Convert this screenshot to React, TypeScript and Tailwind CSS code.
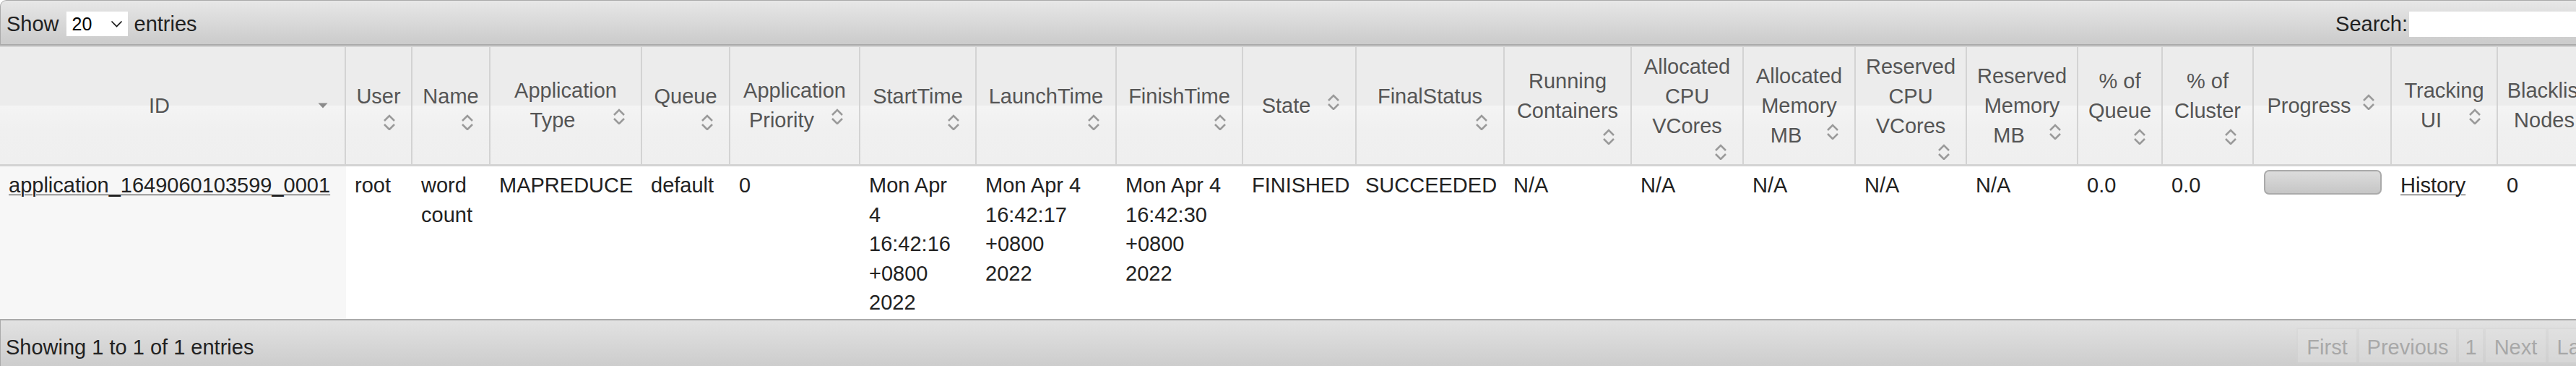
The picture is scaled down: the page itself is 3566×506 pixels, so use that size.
import React from "react";

type HeadCol = {
  w: string;
  lines: string[];
  icon: "inline" | "below";
  sorted?: boolean;
};

// column widths measured off the screenshot, header lines broken as shown
const columns: HeadCol[] = [
  { w: "w-[479px]", lines: ["ID"], icon: "inline", sorted: true },
  { w: "w-[92px]", lines: ["User"], icon: "below" },
  { w: "w-[108px]", lines: ["Name"], icon: "below" },
  { w: "w-[210px]", lines: ["Application", "Type"], icon: "inline" },
  { w: "w-[122px]", lines: ["Queue"], icon: "below" },
  { w: "w-[180px]", lines: ["Application", "Priority"], icon: "inline" },
  { w: "w-[161px]", lines: ["StartTime"], icon: "below" },
  { w: "w-[194px]", lines: ["LaunchTime"], icon: "below" },
  { w: "w-[175px]", lines: ["FinishTime"], icon: "below" },
  { w: "w-[157px]", lines: ["State"], icon: "inline" },
  { w: "w-[205px]", lines: ["FinalStatus"], icon: "below" },
  { w: "w-[176px]", lines: ["Running", "Containers"], icon: "below" },
  { w: "w-[155px]", lines: ["Allocated", "CPU", "VCores"], icon: "below" },
  { w: "w-[155px]", lines: ["Allocated", "Memory", "MB"], icon: "inline" },
  { w: "w-[154px]", lines: ["Reserved", "CPU", "VCores"], icon: "below" },
  { w: "w-[154px]", lines: ["Reserved", "Memory", "MB"], icon: "inline" },
  { w: "w-[117px]", lines: ["% of", "Queue"], icon: "below" },
  { w: "w-[126px]", lines: ["% of", "Cluster"], icon: "below" },
  { w: "w-[191px]", lines: ["Progress"], icon: "inline" },
  { w: "w-[147px]", lines: ["Tracking", "UI"], icon: "inline" },
  { w: "w-[166px]", lines: ["Blacklisted", "Nodes"], icon: "inline" },
];

const SortBoth = () => (
  <svg width="36" height="26" viewBox="0 0 36 26" className="shrink-0">
    <path d="M11 13 L18 6 L25 13" fill="none" stroke="#9a9a9a" strokeWidth="2.6" />
    <path d="M11 18 L18 25 L25 18" fill="none" stroke="#9a9a9a" strokeWidth="2.6" />
  </svg>
);

const SortDesc = () => (
  <svg width="36" height="26" viewBox="0 0 36 26" className="shrink-0">
    <polygon points="11.5,16.5 24.5,16.5 18,23.5" fill="#8a8a8a" />
  </svg>
);

const HeaderCell = ({ col }: { col: HeadCol }) => {
  const Icon = col.sorted ? SortDesc : SortBoth;
  const head = col.icon === "inline" ? col.lines.slice(0, -1) : col.lines;
  const last = col.lines[col.lines.length - 1];

  return (
    <th className="border-t-2 border-b-[3px] border-r-2 border-[#d3d3d3] bg-[linear-gradient(to_bottom,#ececec_0%,#ececec_50%,#f4f4f4_50%,#f0f0f0_70%,#efefef_100%)] px-[12px] py-[2px] align-middle font-normal text-[#555] leading-[41px]">
      <div className="flex flex-col">
        {head.map((line) => (
          <div key={line} className="text-center whitespace-nowrap">
            {line}
          </div>
        ))}
        {col.icon === "inline" ? (
          <div className="flex items-start">
            <span className="flex-1 text-center whitespace-nowrap">{last}</span>
            <Icon />
          </div>
        ) : (
          <div className="flex justify-end">
            <Icon />
          </div>
        )}
      </div>
    </th>
  );
};

const Lines = ({ lines }: { lines: string[] }) => (
  <>
    {lines.map((l) => (
      <div key={l}>{l}</div>
    ))}
  </>
);

const ProgressBar = () => (
  <div className="ml-[2px] mt-[-1px] h-[34px] w-[163px] rounded-[7px] border-2 border-[#aaaaaa] bg-linear-to-b from-[#dcdcdc] to-[#c6c6c6]" />
);

const cells: { key: string; content: React.ReactNode; cls?: string }[] = [
  {
    key: "id",
    content: <a className="underline decoration-1 underline-offset-[3px]">application_1649060103599_0001</a>,
    cls: "bg-[#f7f7f7]",
  },
  { key: "user", content: "root" },
  { key: "name", content: "word count" },
  { key: "type", content: "MAPREDUCE" },
  { key: "queue", content: "default" },
  { key: "prio", content: "0" },
  { key: "start", content: <Lines lines={["Mon Apr", "4", "16:42:16", "+0800", "2022"]} /> },
  { key: "launch", content: <Lines lines={["Mon Apr 4", "16:42:17", "+0800", "2022"]} /> },
  { key: "finish", content: <Lines lines={["Mon Apr 4", "16:42:30", "+0800", "2022"]} /> },
  { key: "state", content: "FINISHED" },
  { key: "final", content: "SUCCEEDED" },
  { key: "running", content: "N/A" },
  { key: "acpu", content: "N/A" },
  { key: "amem", content: "N/A" },
  { key: "rcpu", content: "N/A" },
  { key: "rmem", content: "N/A" },
  { key: "pqueue", content: "0.0" },
  { key: "pcluster", content: "0.0" },
  { key: "progress", content: <ProgressBar /> },
  { key: "tracking", content: <a className="underline decoration-1 underline-offset-[3px]">History</a> },
  { key: "black", content: "0" },
];

const pages = [
  { label: "First", w: "w-[85px]" },
  { label: "Previous", w: "w-[138px]" },
  { label: "1", w: "w-[37px]" },
  { label: "Next", w: "w-[87px]" },
  { label: "Last", w: "w-[82px]" },
];

export default function App() {
  return (
    <div className="h-[506px] w-[3566px] overflow-hidden bg-white font-['Liberation_Sans',Arial,Helvetica,sans-serif] text-[29px] leading-[40.5px] text-[#222]">
      <div className="w-[3624px]">
        {/* length + filter bar */}
        <div className="flex h-[63px] items-center justify-between rounded-t-[9px] border border-b-2 border-[#aaaaaa] bg-linear-to-b from-[#e7e7e7] to-[#cbcbcb] pl-[8px] pr-[8px] pt-[4px]">
          <div className="flex items-center">
            <span>Show</span>
            <div className="ml-[10px] mr-[9px] flex h-[34px] w-[85px] items-center bg-white pl-[8px] pr-[7px] text-[25px] text-black">
              <span className="flex-1">20</span>
              <svg width="17" height="10" viewBox="0 0 17 10">
                <path d="M1.5 1.5 L8.5 8.5 L15.5 1.5" fill="none" stroke="#111" strokeWidth="1.6" />
              </svg>
            </div>
            <span>entries</span>
          </div>
          <div className="flex items-center">
            <span>Search:</span>
            <div className="ml-[2px] h-[35px] w-[280px] bg-white" />
          </div>
        </div>

        <table className="w-[3624px] table-fixed border-separate border-spacing-0">
          <colgroup>
            {columns.map((c, i) => (
              <col key={i} className={c.w} />
            ))}
          </colgroup>
          <thead>
            <tr className="h-[167px]">
              {columns.map((c, i) => (
                <HeaderCell key={i} col={c} />
              ))}
            </tr>
          </thead>
          <tbody>
            <tr>
              {cells.map((c) => (
                <td
                  key={c.key}
                  className={`px-[12px] pt-[6px] pb-[2px] align-top ${c.cls ?? ""}`}
                >
                  {c.content}
                </td>
              ))}
            </tr>
          </tbody>
        </table>

        {/* info + pagination */}
        <div className="flex justify-between border-x border-t-2 border-[#aaaaaa] bg-linear-to-b from-[#e2e2e2] to-[#c9c9c9] pl-[7px] pr-[15px] pt-[10px] pb-[14px]">
          <div className="pt-[7px]">Showing 1 to 1 of 1 entries</div>
          <div className="flex">
            {pages.map((p) => (
              <div
                key={p.label}
                className={`${p.w} border-2 border-[#d3d3d3] bg-[#e6e6e6] pt-[5px] pb-[1px] text-center text-[#555] opacity-35`}
              >
                {p.label}
              </div>
            ))}
          </div>
        </div>
      </div>
    </div>
  );
}
